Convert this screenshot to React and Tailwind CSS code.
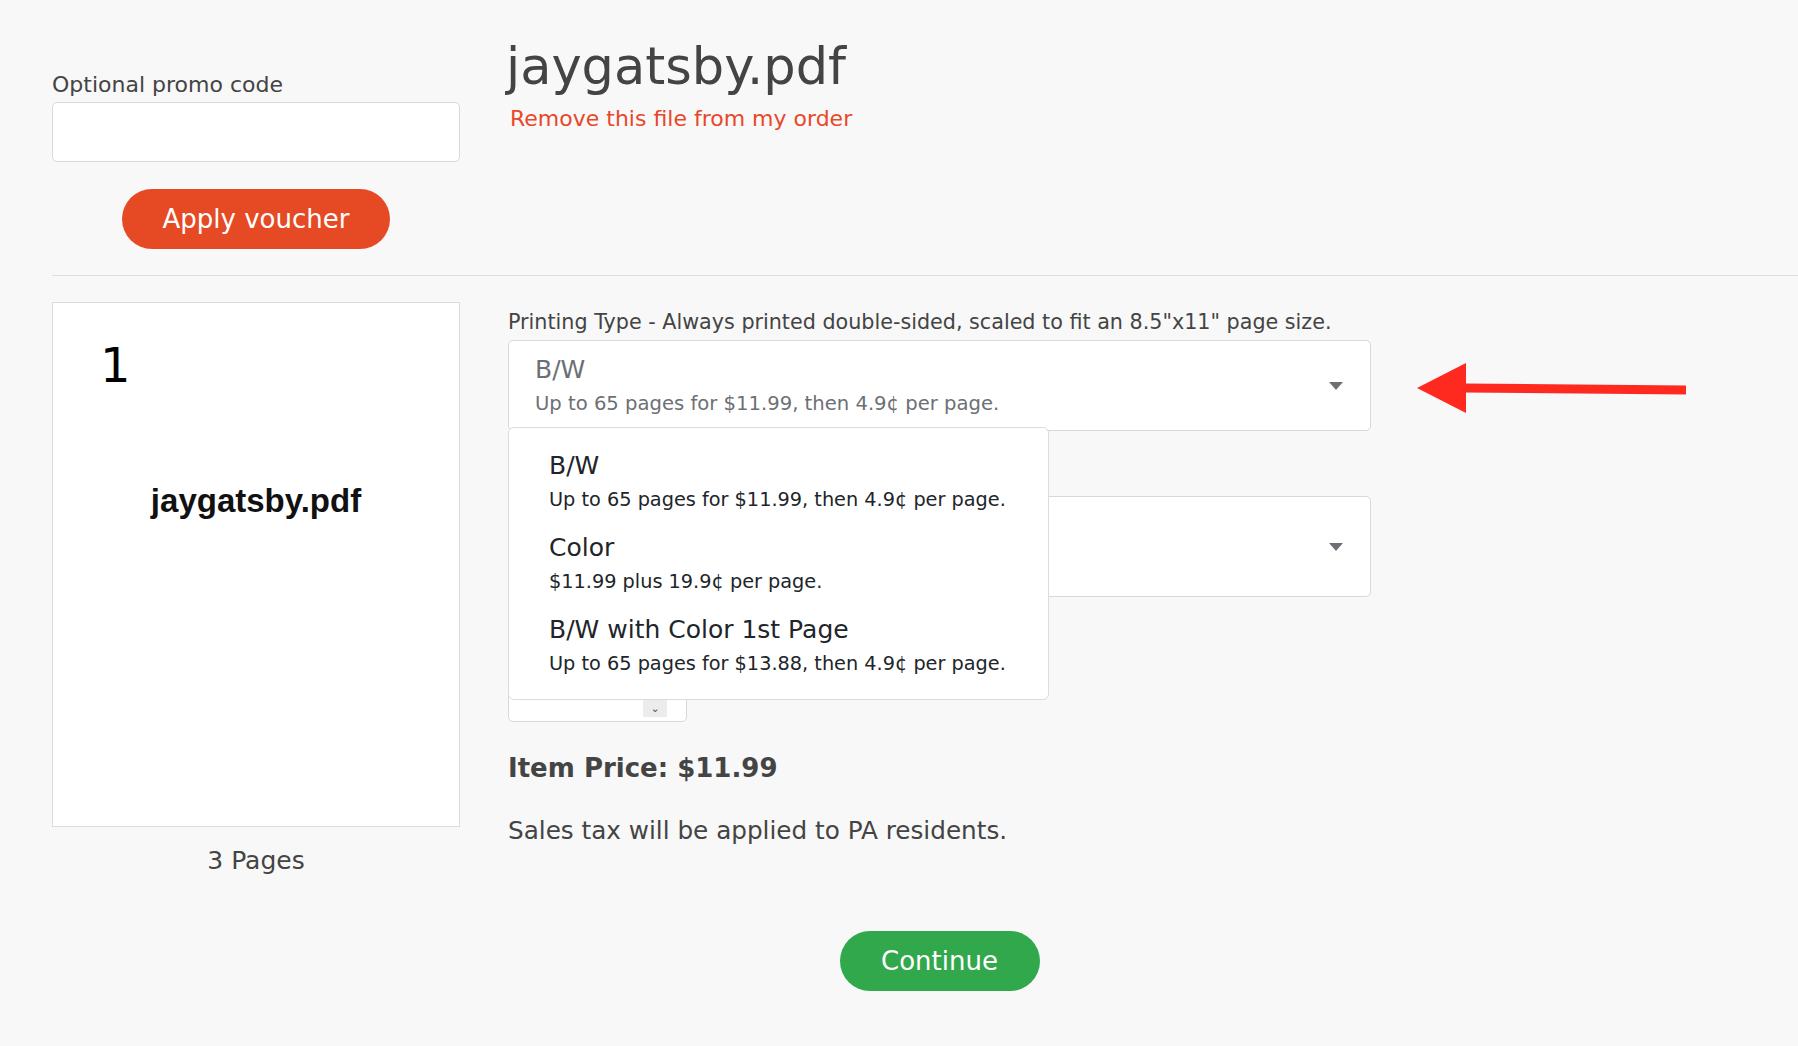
import React from "react";

const options = [
  { name: "B/W", note: "Up to 65 pages for $11.99, then 4.9¢ per page." },
  { name: "Color", note: "$11.99 plus 19.9¢ per page." },
  { name: "B/W with Color 1st Page", note: "Up to 65 pages for $13.88, then 4.9¢ per page." },
];

function Caret() {
  return (
    <svg width="14" height="8" viewBox="0 0 14 8" className="shrink-0">
      <path d="M0 0 L14 0 L7 8 Z" fill="#6c7075" />
    </svg>
  );
}

function PointerArrow() {
  return (
    <svg className="absolute left-[1410px] top-[358px]" width="285" height="62" viewBox="0 0 285 62">
      <polygon points="7,30 56,5 56,55" fill="#fe2a1f" />
      <polygon points="54,25.5 276,27.5 276,36.5 54,34.5" fill="#fe2a1f" />
    </svg>
  );
}

export default function App() {
  return (
    <div className="relative min-h-[1046px] bg-[#f8f8f8] font-['DejaVu_Sans',sans-serif] text-[#444]">
      <PointerArrow />

      {/* promo + file title */}
      <div className="flex items-start pl-[52px]">
        <div className="w-[408px] pt-[72px] flex flex-col">
          <label className="text-[22px] leading-[26px] text-[#444]">Optional promo code</label>
          <input className="mt-[4px] h-[60px] w-full rounded-[5px] border border-[#d5d9de] bg-white" />
          <button className="mt-[27px] self-center h-[60px] w-[268px] rounded-full bg-[#e64a25] text-[26px] leading-none text-white">
            Apply voucher
          </button>
        </div>
        <div className="ml-[48px] pt-[39px] flex flex-col">
          <h1 className="ml-[-2px] text-[51px] leading-[56px] text-[#444]">jaygatsby.pdf</h1>
          <a className="mt-[11px] ml-[2px] text-[22px] leading-[26px] text-[#e8472a]">Remove this file from my order</a>
        </div>
      </div>

      <div className="mt-[26px] ml-[52px] h-px bg-[#dedede]" />

      {/* file options */}
      <div className="flex items-start pl-[52px]">
        <div className="w-[408px] pt-[26px] flex flex-col items-center">
          <div className="h-[525px] w-full border border-[#dcdcdc] bg-white flex flex-col">
            <div className="mt-[38px] ml-[47px] text-[48px] leading-[48px] text-black">1</div>
            <div className="mt-[94px] text-center font-['Liberation_Sans',Arial,sans-serif] font-bold text-[33px] leading-[36px] text-[#111]">
              jaygatsby.pdf
            </div>
          </div>
          <div className="mt-[20px] text-[25px] leading-[28px] text-[#444]">3 Pages</div>
        </div>

        <div className="ml-[48px] w-[863px] pt-[34px] flex flex-col">
          <label className="text-[20.7px] leading-[24px] text-[#444]">
            Printing Type - Always printed double-sided, scaled to fit an 8.5"x11" page size.
          </label>

          <div className="relative mt-[6px]">
            <div className="h-[91px] rounded-[5px] border border-[#d5d9de] bg-white pl-[26px] pr-[27px] flex items-center">
              <div className="flex-1 flex flex-col text-[#6c7075]">
                <span className="text-[25px] leading-[30px]">B/W</span>
                <span className="mt-[7px] text-[19.6px] leading-[24px]">Up to 65 pages for $11.99, then 4.9¢ per page.</span>
              </div>
              <Caret />
            </div>

            <ul className="absolute left-0 top-[87px] z-10 w-[541px] rounded-[6px] border border-[#dcdcdc] bg-white pt-[13px] pb-[12px] text-[#212529]">
              {options.map((o) => (
                <li key={o.name} className="pl-[40px] pt-[10px] pb-[11px] flex flex-col">
                  <span className="text-[25px] leading-[30px]">{o.name}</span>
                  <span className="mt-[7px] text-[19.3px] leading-[24px]">{o.note}</span>
                </li>
              ))}
            </ul>
          </div>

          <div className="mt-[65px] h-[101px] rounded-[5px] border border-[#d5d9de] bg-white pr-[27px] flex items-center justify-end">
            <Caret />
          </div>

          <div className="mt-[79px] h-[46px] w-[179px] rounded-[5px] border border-[#d5d9de] bg-white pl-[24px] pr-[19px] flex items-center justify-end">
            <span className="h-[36px] w-[24px] bg-[#ececec] flex items-end justify-center text-[11px] text-[#555]">⌄</span>
          </div>

          <h2 className="mt-[30px] text-[26px] leading-[32px] font-bold text-[#444]">Item Price: $11.99</h2>
          <p className="mt-[33px] text-[24.7px] leading-[28px] text-[#444]">Sales tax will be applied to PA residents.</p>

          <button className="mt-[86px] self-center h-[60px] w-[200px] rounded-full bg-[#32a84d] text-[26px] leading-none text-white">
            Continue
          </button>
        </div>
      </div>
    </div>
  );
}
